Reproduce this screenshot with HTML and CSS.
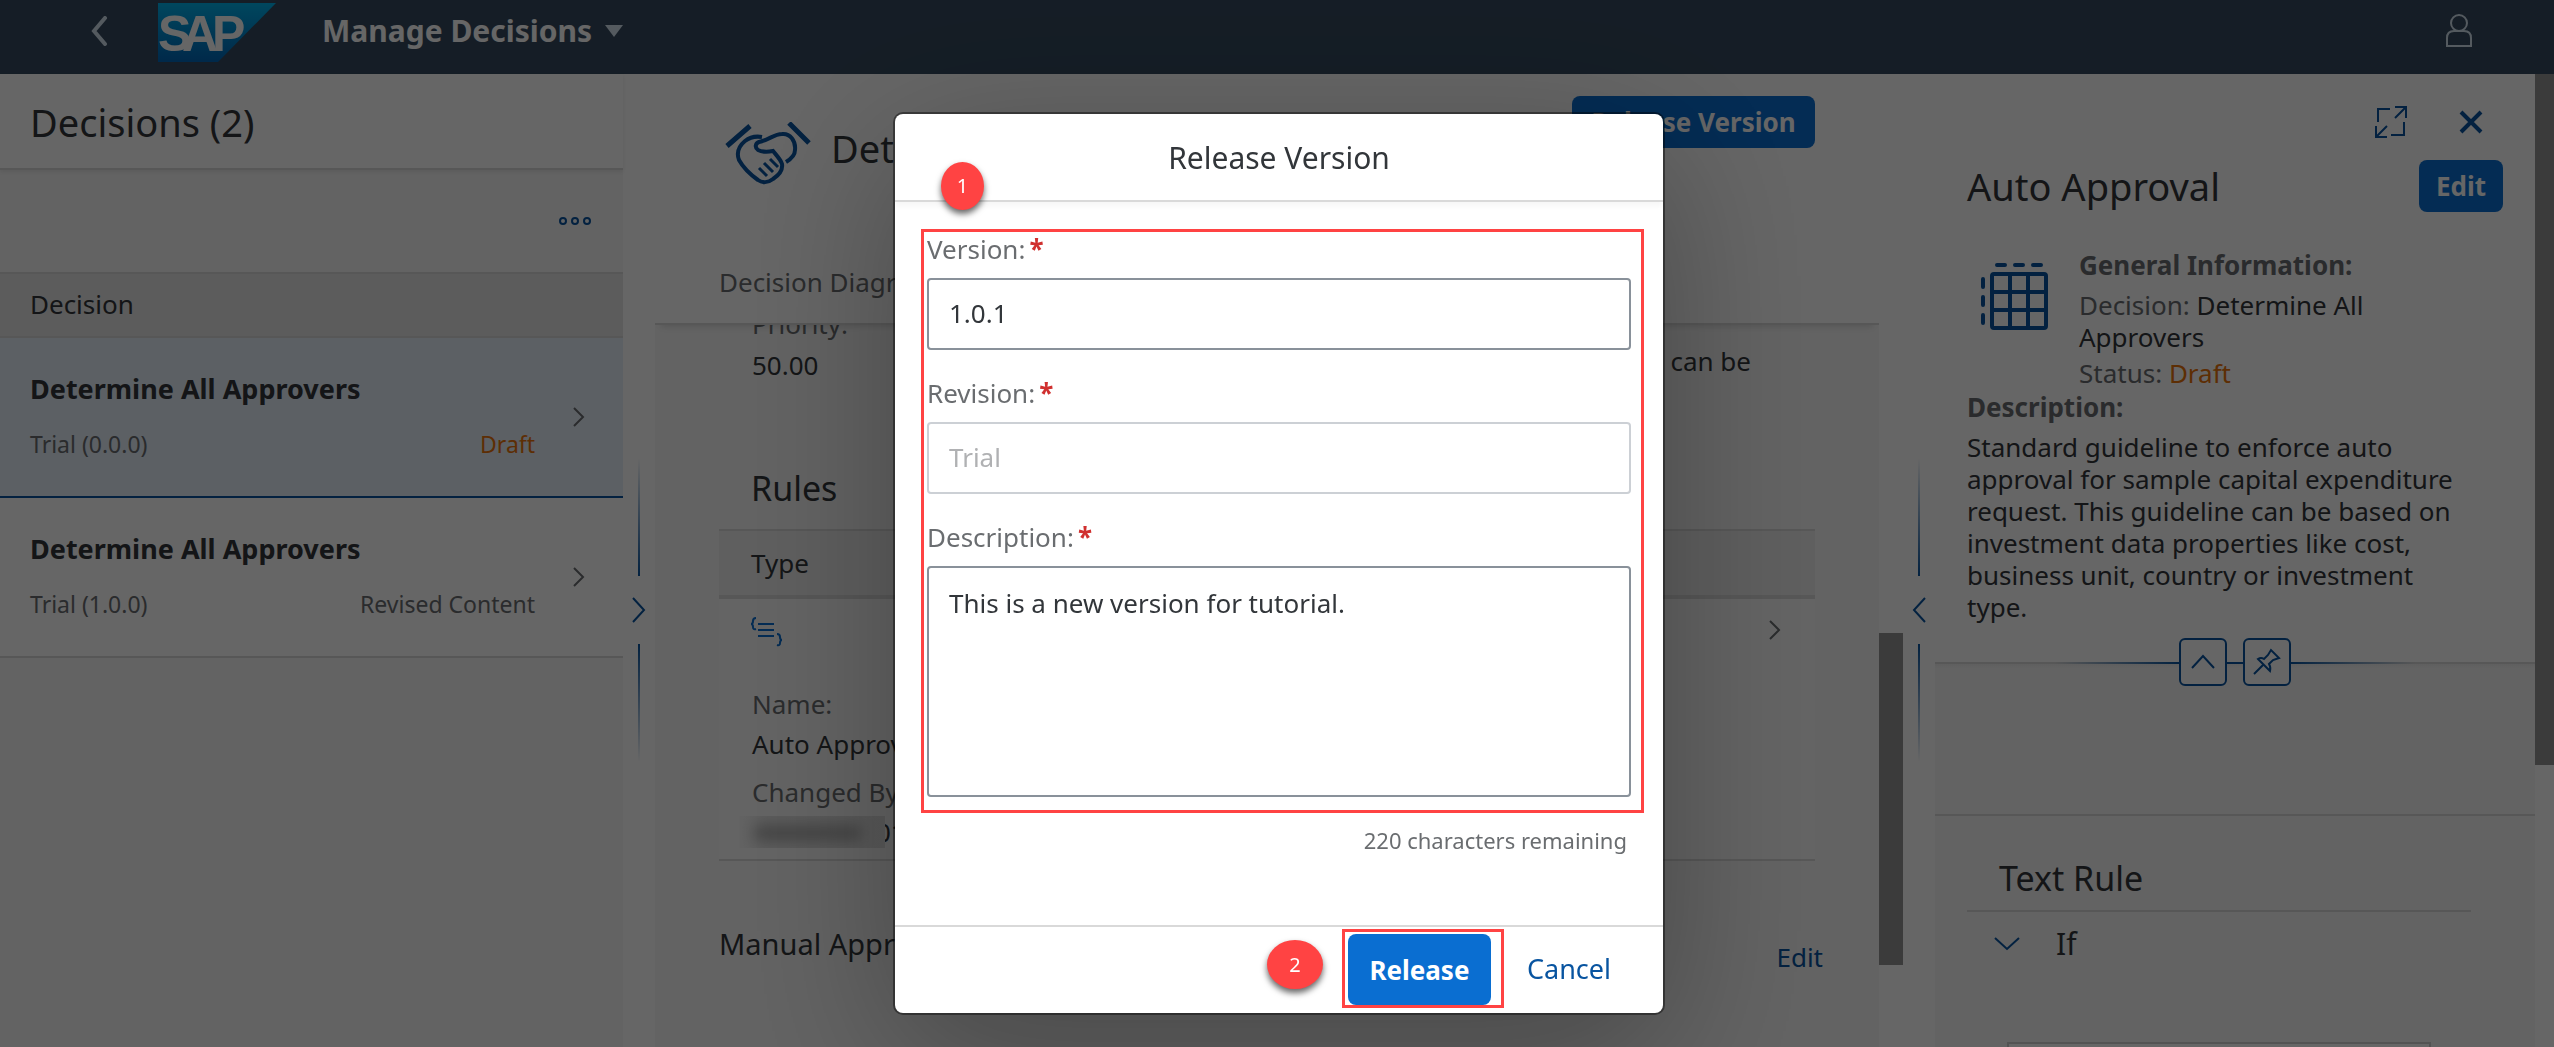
FILE: index.html
```html
<!DOCTYPE html>
<html lang="en">
<head>
<meta charset="utf-8">
<title>Manage Decisions</title>
<link rel="stylesheet" href="styles.css">
</head>
<body>
<div class="app">
  <header class="shell">
    <button class="icon-btn shell-back" aria-label="Back"><svg width="18" height="30" viewBox="0 0 18 30"><path d="M15 2 4 15l11 13" fill="none" stroke="currentColor" stroke-width="4" stroke-linecap="round"/></svg></button>
    <svg class="logo" width="118" height="59" viewBox="0 0 118 59" role="img" aria-label="SAP">
      <defs><linearGradient id="lg" x1="0" y1="0" x2="0" y2="1"><stop offset="0" stop-color="#00b1eb"/><stop offset="1" stop-color="#0066b8"/></linearGradient></defs>
      <path d="M0 0h118L60 59H0z" fill="url(#lg)"/>
      <text class="logo-text" x="0 24 54" y="48">SAP</text>
    </svg>
    <button class="shell-title">Manage Decisions
      <svg width="20" height="13" viewBox="0 0 20 13"><path d="M1 0h18l-9 12z" fill="#d1e0ee"/></svg></button>
    <button class="icon-btn shell-user" aria-label="User"><svg width="28" height="34" viewBox="0 0 28 34"><g fill="none" stroke="currentColor" stroke-width="2"><ellipse cx="14" cy="9" rx="8" ry="8"/><path d="M2 32V24q0-7 7-7h10q7 0 7 7v8z"/></g></svg></button>
  </header>

  <main class="columns">
    <section class="list">
      <h1 class="list-title">Decisions (2)</h1>
      <div class="list-tools"><button class="icon-btn" aria-label="More"><svg width="34" height="10" viewBox="0 0 34 10"><g fill="none" stroke="currentColor" stroke-width="2"><circle cx="5" cy="5" r="3"/><circle cx="17" cy="5" r="3"/><circle cx="29" cy="5" r="3"/></g></svg></button></div>
      <div class="list-head">Decision</div>
      <a class="item selected" href="#">
        <span class="item-main"><strong>Determine All Approvers</strong><span class="item-sub"><span>Trial (0.0.0)</span><span class="draft">Draft</span></span></span>
        <svg width="12" height="20" viewBox="0 0 12 20"><path d="m1 1 9 9-9 9" fill="none" stroke="currentColor" stroke-width="2"/></svg>
      </a>
      <a class="item" href="#">
        <span class="item-main"><strong>Determine All Approvers</strong><span class="item-sub"><span>Trial (1.0.0)</span><span>Revised Content</span></span></span>
        <svg width="12" height="20" viewBox="0 0 12 20"><path d="m1 1 9 9-9 9" fill="none" stroke="currentColor" stroke-width="2"/></svg>
      </a>
    </section>

    <div class="splitter"><i class="line up"></i><button class="icon-btn" aria-label="Expand"><svg width="14" height="26" viewBox="0 0 14 26"><path d="m1 1 11 12L1 25" fill="none" stroke="currentColor" stroke-width="2"/></svg></button><i class="line down"></i></div>

    <section class="detail">
      <div class="detail-head">
        <div class="detail-top">
          <svg class="hands" width="86" height="64" viewBox="0 0 86 64"><g fill="none" stroke="#0854a0" stroke-width="5"><path d="M2 24 25 4M64 1l20 20"/><path stroke-width="4" d="M37 15c-6-1-12 0-17 4-6 5-9 11-6 19 5 9 12 15 19 20 4 3 10 3 15-1 6-4 10-9 9-15-1-4-5-8-9-13-5 1-11 1-15-1-4-3-2-7 1-8 10-2 15-8 23-8 8-1 14 7 13 16 0 5-4 9-9 12"/><path stroke-width="3" d="m34 46 8 8m-3-13 9 9m-3-13 8 8"/></g></svg>
          <h2>Determine All Approvers</h2>
          <button class="primary release-top">Release Version</button>
        </div>
        <a class="tab" href="#">Decision Diagram</a>
      </div>
      <div class="detail-scroll">
        <div class="detail-body">
          <div class="priority"><div><div class="label">Priority:</div><div>50.00</div></div><p>can be</p></div>
          <div class="card">
            <h3>Rules</h3>
            <div class="card-head">Type</div>
            <div class="card-row">
              <div class="row-icons">
                <svg width="34" height="30" viewBox="0 0 34 30"><g fill="none" stroke="#0a6ed1" stroke-width="2"><path d="M6 1Q3 1 3 4t-2 3q2 0 2 3t3 2M8 7h16M8 13h16M8 19h16M27 17q3 0 3 3t2 3q-2 0-2 3t-3 2"/></g></svg>
                <svg class="grey" width="12" height="20" viewBox="0 0 12 20"><path d="m1 1 9 9-9 9" fill="none" stroke="currentColor" stroke-width="2"/></svg>
              </div>
              <div class="label">Name:</div>
              <div>Auto Approval</div>
              <div class="label changed">Changed By:</div>
              <div class="redacted-row"><i class="redacted"></i><span>01</span></div>
            </div>
          </div>
          <div class="manual"><h4>Manual Approval</h4><a href="#">Edit</a></div>
        </div>
        <div class="track"><i class="thumb"></i></div>
      </div>
    </section>

    <div class="splitter"><i class="line up"></i><button class="icon-btn" aria-label="Collapse"><svg width="14" height="26" viewBox="0 0 14 26"><path d="M13 1 2 13l11 12" fill="none" stroke="currentColor" stroke-width="2"/></svg></button><i class="line down"></i></div>

    <section class="side">
      <div class="side-head">
        <div class="side-icons">
          <button class="icon-btn" aria-label="Full screen"><svg width="32" height="32" viewBox="0 0 32 32"><path d="M15 3H3v13M20 1h11v11M31 1 20 12M29 16v13H16M1 20v11h11M1 31l11-11" fill="none" stroke="currentColor" stroke-width="2"/></svg></button>
          <button class="icon-btn" aria-label="Close"><svg width="24" height="24" viewBox="0 0 24 24"><path d="m2 2 20 20M22 2 2 22" fill="none" stroke="currentColor" stroke-width="4"/></svg></button>
        </div>
        <div class="side-title"><h2>Auto Approval</h2><button class="primary">Edit</button></div>
        <div class="info">
          <svg width="68" height="68" viewBox="0 0 68 68"><g fill="none" stroke="#0854a0" stroke-width="4"><rect x="11" y="11" width="54" height="54" rx="2"/><path d="M29 11v54M47 11v54M11 29h54M11 47h54"/><path stroke-linecap="round" d="M16 2h8M34 2h8M52 2h8M2 16v8M2 34v8M2 52v8"/></g></svg>
          <div class="info-text">
            <b class="label">General Information:</b>
            <p class="info-decision"><span class="label">Decision:</span> Determine All Approvers</p>
            <p><span class="label">Status:</span> <span class="draft">Draft</span></p>
          </div>
        </div>
        <b class="label">Description:</b>
        <p class="desc">Standard guideline to enforce auto approval for sample capital expenditure request. This guideline can be based on investment data properties like cost, business unit, country or investment type.</p>
      </div>
      <div class="pins">
        <i class="hline left"></i>
        <button class="pin" aria-label="Collapse header"><svg width="26" height="16" viewBox="0 0 26 16"><path d="M2 14 13 2l11 12" fill="none" stroke="currentColor" stroke-width="2"/></svg></button>
        <i class="hline mid"></i>
        <button class="pin" aria-label="Pin header"><svg width="28" height="28" viewBox="0 0 28 28"><path d="m1 26 10-10M5 11l12 12q1-4-1-7l4-4 6-2-8-8-3 5-4 4q-3-2-6 0z" fill="none" stroke="currentColor" stroke-width="2"/></svg></button>
        <i class="hline right"></i>
      </div>
      <div class="rule">
        <h3>Text Rule</h3>
        <div class="rule-row"><svg width="26" height="14" viewBox="0 0 26 14"><path d="m1 1 12 11L25 1" fill="none" stroke="currentColor" stroke-width="2"/></svg><span>If</span></div>
        <div class="rule-box"></div>
      </div>
    </section>
    <div class="page-track"><i class="page-thumb"></i></div>
  </main>
</div>

<div class="backdrop">
  <form class="dialog" role="dialog" aria-labelledby="dlg-title">
    <h2 class="dialog-title" id="dlg-title">Release Version</h2>
    <div class="dialog-body">
      <div class="marked fields">
        <span class="badge one">1</span>
        <label for="version">Version:<b>*</b></label>
        <input id="version" type="text" value="1.0.1">
        <label for="revision">Revision:<b>*</b></label>
        <input id="revision" type="text" value="Trial" disabled>
        <label for="description">Description:<b>*</b></label>
        <textarea id="description">This is a new version for tutorial.</textarea>
      </div>
      <div class="remaining">220 characters remaining</div>
    </div>
    <div class="dialog-foot">
      <div class="marked ok"><span class="badge two">2</span><button type="button" class="primary">Release</button></div>
      <button type="button" class="plain">Cancel</button>
    </div>
  </form>
</div>
</body>
</html>
```
FILE: styles.css
```css
* { box-sizing: border-box; }
body, h1, h2, h3, h4, p { margin: 0; font-weight: 400; }
body {
  font-family: "Noto Sans", "Open Sans", sans-serif;
  font-size: 26px;
  line-height: 32px;
  color: #32363a;
  background: #fff;
  overflow: hidden;
}
svg { display: block; flex: none; }
a { color: #0854a0; text-decoration: none; }
button { font: inherit; border: 0; background: none; padding: 0; cursor: pointer; }
.icon-btn { color: #0854a0; flex: none; }
.label { color: #6a6d70; }
.draft { color: #e9730c; }
.primary { background: #0a6ed1; color: #fff; font-weight: 700; border-radius: 8px; flex: none; }

.app { height: 100vh; display: flex; flex-direction: column; }
.shell { flex: none; height: 74px; padding: 0 81px 12px 90px; background: #354a5f; display: flex; align-items: center; }
.shell-back { color: #d1e0ee; margin-right: 50px; }
.logo { margin-top: 2px; }
.logo-text { font-family: "Liberation Sans", Arial, sans-serif; font-weight: 700; font-size: 50px; fill: #fff; }
.shell-title { display: flex; align-items: center; gap: 12px; margin-left: 46px; color: #fff; font-size: 30px; font-weight: 700; }
.shell-user { color: #d1e0ee; margin-left: auto; }

.columns { flex: 1; min-height: 0; display: grid; grid-template-columns: 623fr 32px 1248fr 32px 600fr 19px; }

/* Decision list */
.list { background: #f7f7f7; }
.list-title { height: 96px; padding-left: 30px; font-size: 38px; line-height: 96px; background: #fff; border-bottom: 2px solid #d9d9d9; box-shadow: 0 2px 4px rgba(0,0,0,.08); }
.list-tools { height: 102px; padding-right: 31px; display: flex; align-items: center; justify-content: flex-end; }
.list-head { height: 66px; padding-left: 30px; line-height: 60px; background: #e5e5e5; border: solid #d9d9d9; border-width: 2px 0; }
.item { display: flex; align-items: center; gap: 38px; height: 160px; padding: 0 38px 0 30px; color: #6a6d70; background: #fff; border-bottom: 2px solid #d9d9d9; }
.item.selected { background: #e5f0fa; border-bottom-color: #0854a0; }
.item-main { flex: 1; display: flex; flex-direction: column; gap: 23px; padding-bottom: 2px; }
.item strong { color: #32363a; font-size: 27px; }
.item-sub { display: flex; justify-content: space-between; font-size: 23px; }

/* Column splitters */
.splitter { display: flex; flex-direction: column; align-items: center; padding-top: 384px; gap: 21px; }
.line { width: 2px; height: 118px; }
.up { background: linear-gradient(transparent, #0854a0); }
.down { background: linear-gradient(#0854a0, transparent); }

/* Decision detail */
.detail { display: flex; flex-direction: column; min-width: 0; min-height: 0; }
.detail-head { position: relative; height: 251px; flex: none; margin-right: 24px; padding: 22px 64px 0; background: #fff; border-bottom: 2px solid #d9d9d9; box-shadow: 0 8px 6px -6px rgba(0,0,0,.12); }
.detail-top { display: flex; align-items: flex-start; padding-left: 6px; }
.hands { margin-top: 26px; }
.detail-top h2 { flex: 1; margin: 28px 0 0 20px; font-size: 38px; line-height: 48px; white-space: nowrap; }
.release-top { width: 243px; height: 52px; }
.tab { display: block; margin-top: 80px; color: #6a6d70; }
.detail-scroll { flex: 1; min-height: 0; display: flex; }
.detail-body { flex: 1; overflow: hidden; background: #f7f7f7; padding: 0 64px; }
.priority { display: flex; justify-content: space-between; align-items: flex-end; margin-top: -21px; padding: 0 64px 0 33px; line-height: 41px; }
.priority p { padding-bottom: 4px; }
.card h3 { margin-top: 74px; padding: 0 32px 13px; font-size: 34px; line-height: 56px; }
.card-head { height: 70px; padding-left: 32px; line-height: 65px; background: #ededed; border-top: 2px solid #d9d9d9; border-bottom: 4px solid #d9d9d9; }
.card-row { padding: 18px 34px 10px 33px; height: 262px; background: #fafafa; border-bottom: 2px solid #d9d9d9; line-height: 40px; }
.row-icons { display: flex; justify-content: space-between; align-items: flex-start; height: 67px; margin-left: -2px; }
.grey { color: #6a6d70; margin-top: 3px; }
.changed { margin-top: 8px; }
.redacted-row { display: flex; align-items: center; }
.redacted { position: relative; overflow: hidden; flex: none; width: 146px; height: 32px; margin: 0 -9px 0 -13px; background: linear-gradient(90deg, #f7f7f7, #e6e6e6 20%, #dedede); }
.redacted::before { content: ""; display: block; height: 14px; margin: 10px 24px 0 16px; background: #a8a8a8; filter: blur(7px); }
.manual { display: flex; justify-content: space-between; padding: 61px 0 0; line-height: 44px; }
.manual h4 { font-size: 29px; }
.manual a { margin: 13px -8px 0 0; }
.track { width: 24px; padding-top: 308px; }
.thumb { display: block; height: 332px; background: #949494; }

/* Side panel */
.side { background: #f7f7f7; min-width: 0; overflow: hidden; }
.side-head { padding: 32px 32px 0; background: #fff; height: 588px; }
.side-icons { display: flex; justify-content: flex-end; align-items: center; gap: 52px; padding-right: 20px; }
.side-title { display: flex; justify-content: space-between; align-items: center; margin-top: 22px; }
.side-title h2 { font-size: 38px; }
.side-title .primary { width: 84px; height: 52px; }
.info { display: flex; gap: 30px; padding: 37px 60px 0 14px; }
.info > svg { margin-top: 14px; }
.info-text { flex: 1; line-height: 32px; }
.info-decision { margin: 8px 0 4px; }
.side-head > .label { display: block; margin-top: 2px; }
.desc { margin-top: 8px; padding-right: 40px; }
.pins { height: 48px; margin-top: -24px; display: flex; align-items: center; justify-content: center; color: #0854a0; background: linear-gradient(#fff 24px, #d9d9d9 24px, #d9d9d9 26px, #ededed 26px, #f7f7f7 30px); }
.pin { width: 48px; height: 48px; color: #0854a0; background: #fff; border: 2px solid #0854a0; border-radius: 6px; display: flex; align-items: center; justify-content: center; }
.hline { height: 2px; width: 124px; margin-top: 2px; }
.left { background: linear-gradient(90deg, transparent, #0854a0); }
.right { background: linear-gradient(90deg, #0854a0, transparent); }
.mid { width: 16px; background: #0854a0; }
.rule { margin-top: 128px; padding: 37px 64px 0 32px; border-top: 2px solid #d9d9d9; }
.rule h3 { padding: 0 32px 7px; font-size: 34px; line-height: 50px; border-bottom: 2px solid #d9d9d9; }
.rule-row { display: flex; align-items: center; gap: 36px; padding: 16px 0 0 27px; font-size: 30px; color: #0854a0; }
.rule-row span { color: #32363a; }
.rule-box { height: 60px; margin: 82px 40px 0; background: #fff; border: 2px solid #d0d0d0; }
.page-thumb { display: block; height: 691px; background: #949494; }

/* Release dialog */
.backdrop { position: fixed; inset: 0; background: rgba(0,0,0,.6); display: flex; justify-content: center; align-items: flex-start; padding: 114px 0 0 4px; }
.dialog { width: 768px; background: #fff; border-radius: 8px; box-shadow: 0 0 0 2px rgba(0,0,0,.42), 0 40px 160px rgba(0,0,0,.3); }
.dialog-title { height: 88px; line-height: 88px; font-size: 30px; text-align: center; border-bottom: 2px solid #d9d9d9; box-shadow: 0 4px 6px rgba(0,0,0,.04); }
.dialog-body { height: 723px; padding: 27px 19px 0 26px; }
.marked { position: relative; border: 3px solid #ff4343; }
.fields { padding: 1px 10px 13px 3px; display: flex; flex-direction: column; }
.fields label { color: #6a6d70; margin-bottom: 13px; }
.fields label b { color: #d0302f; margin-left: 4px; }
.fields input, .fields textarea { font: inherit; color: #32363a; background: #fff; border: 2px solid #89919a; border-radius: 4px; width: 100%; margin: 0 0 27px; padding: 0 20px 2px; height: 72px; }
.fields input:disabled { color: #b0b1b3; border-color: #ccd0d5; }
.fields textarea { display: block; height: 231px; margin: 0; padding: 19px 20px; resize: none; }
.badge { position: absolute; display: flex; align-items: center; justify-content: center; border-radius: 50%; background: #ff4343; color: #fff; font-size: 20px; box-shadow: 0 4px 6px rgba(0,0,0,.6); }
.one { left: 17px; top: -70px; width: 43px; height: 48px; }
.two { left: -78px; top: 8px; width: 56px; height: 49px; }
.remaining { margin-top: 11px; padding-right: 17px; text-align: right; color: #6a6d70; font-size: 22px; }
.dialog-foot { height: 88px; padding: 2px 52px 0 0; display: flex; align-items: flex-start; justify-content: flex-end; gap: 23px; border-top: 2px solid #d9d9d9; }
.ok { padding: 2px 10px 0 3px; }
.ok .primary { display: block; width: 143px; height: 71px; }
.plain { height: 79px; color: #0854a0; font-size: 27px; }
```
